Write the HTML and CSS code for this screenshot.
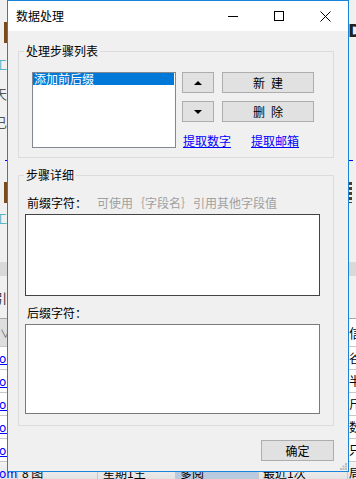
FILE: index.html
```html
<!DOCTYPE html>
<html lang="zh-CN">
<head>
    <meta charset="UTF-8">
    <meta name="viewport" content="width=device-width, initial-scale=1.0">
    <title>数据处理</title>
    <link rel="stylesheet" href="styles.css">
</head>
<body>
<div class="screen">
    <!-- the app window behind the dialog -->
    <div class="backdrop">
        <div class="strip h22"></div>
        <div class="strip h21">
            <span class="edge-l"><i class="mark mark-brown"></i></span>
            <span class="edge-r"><b class="glyph-d">D</b></span>
        </div>
        <div class="strip h117">
            <span class="edge-l">
                <span class="frag frag-teal f1">工</span>
                <span class="frag f2">天</span>
                <span class="frag f3">已</span>
            </span>
            <span class="edge-r"></span>
        </div>
        <div class="strip h1">
            <span class="edge-l"><i class="dot"></i></span>
            <span class="edge-r"><i class="blue-line"></i></span>
        </div>
        <div class="strip h21"></div>
        <div class="strip h21">
            <span class="edge-l"><i class="mark mark-brown"></i></span>
            <span class="edge-r"><i class="mark mark-brown-r"></i></span>
        </div>
        <div class="strip h59">
            <span class="edge-l"><span class="frag frag-teal f4">工</span></span>
        </div>
        <div class="strip h14 band"></div>
        <div class="strip h42">
            <span class="edge-l"><span class="frag f5">引</span></span>
        </div>
        <div class="table-head">
            <span class="head-l">∨</span>
            <span class="head-r">信</span>
        </div>
        <div class="table-row"><span class="c1">om</span><span class="c2">8 图</span><span class="c3">星期1生</span><span class="c4">参阅</span><span class="c5">最近1次</span><span class="c6">谷</span></div>
        <div class="table-row"><span class="c1">om</span><span class="c2">8 图</span><span class="c3">星期1生</span><span class="c4">参阅</span><span class="c5">最近1次</span><span class="c6">半</span></div>
        <div class="table-row"><span class="c1">om</span><span class="c2">8 图</span><span class="c3">星期1生</span><span class="c4">参阅</span><span class="c5">最近1次</span><span class="c6">斤</span></div>
        <div class="table-row"><span class="c1">om</span><span class="c2">8 图</span><span class="c3">星期1生</span><span class="c4">参阅</span><span class="c5">最近1次</span><span class="c6">数</span></div>
        <div class="table-row"><span class="c1">om</span><span class="c2">8 图</span><span class="c3">星期1生</span><span class="c4">参阅</span><span class="c5">最近1次</span><span class="c6">只</span></div>
        <div class="table-row row-last"><span class="c1">om</span><span class="c2">8 图</span><span class="c3">星期1生</span><span class="c4 c4-sel">爹阅</span><span class="c5">最近1次</span><span class="c6">局</span></div>
    </div>

    <div class="dialog">
        <div class="titlebar">
            <span class="title">数据处理</span>
            <div class="caption-buttons">
                <span class="cap"><svg width="10" height="1"><rect width="10" height="1" fill="#000"/></svg></span>
                <span class="cap"><svg width="10" height="10"><rect x="0.5" y="0.5" width="9" height="9" fill="none" stroke="#000"/></svg></span>
                <span class="cap"><svg width="11" height="11"><path d="M0.5 0.5 L10.5 10.5 M10.5 0.5 L0.5 10.5" stroke="#000" stroke-width="1"/></svg></span>
            </div>
        </div>

        <div class="client">
            <fieldset class="group">
                <legend>处理步骤列表</legend>
                <div class="steps">
                    <div class="listbox">
                        <div class="list-item selected">添加前后缀</div>
                    </div>
                    <div class="step-tools">
                        <div class="tool-row">
                            <button class="btn btn-arrow"><span class="tri tri-up"></span></button>
                            <button class="btn btn-wide">新建</button>
                        </div>
                        <div class="tool-row tool-row-2">
                            <button class="btn btn-arrow"><span class="tri tri-down"></span></button>
                            <button class="btn btn-wide">删除</button>
                        </div>
                        <div class="links">
                            <a href="#">提取数字</a>
                            <a href="#">提取邮箱</a>
                        </div>
                    </div>
                </div>
            </fieldset>

            <fieldset class="group group-detail">
                <legend>步骤详细</legend>
                <div class="detail">
                    <div class="field-label">前缀字符：<span class="hint">可使用｛字段名｝引用其他字段值</span></div>
                    <textarea class="field field-prefix"></textarea>
                    <div class="field-label field-label-2">后缀字符：</div>
                    <textarea class="field field-suffix"></textarea>
                </div>
            </fieldset>

            <div class="footer">
                <button class="btn btn-ok">确定</button>
            </div>
        </div>

        <svg class="grip" width="7" height="7">
            <rect x="5" y="0" width="2" height="2" fill="#bdbdbd"/>
            <rect x="2.5" y="2.5" width="2" height="2" fill="#bdbdbd"/>
            <rect x="5" y="2.5" width="2" height="2" fill="#bdbdbd"/>
            <rect x="0" y="5" width="2" height="2" fill="#bdbdbd"/>
            <rect x="2.5" y="5" width="2" height="2" fill="#bdbdbd"/>
            <rect x="5" y="5" width="2" height="2" fill="#bdbdbd"/>
        </svg>
    </div>
</div>
</body>
</html>
```

FILE: styles.css
```css
body {
    margin: 0;
    padding: 0;
    font-family: "Noto Sans CJK SC", "Noto Sans", sans-serif;
    font-size: 12px;
    color: #000;
}

.screen {
    position: relative;
    width: 356px;
    height: 479px;
    overflow: hidden;
}

/* ---- background window ---- */

.backdrop {
    display: flex;
    flex-direction: column;
    height: 479px;
    background-color: #f0f0f0;
    overflow: hidden;
}

.strip {
    display: flex;
    justify-content: space-between;
    flex-shrink: 0;
}

.h1 { height: 1px; }
.h14 { height: 14px; }
.h21 { height: 21px; }
.h22 { height: 22px; }
.h42 { height: 42px; }
.h59 { height: 59px; }
.h117 { height: 117px; }

.band {
    background-color: #d9d9d9;
}

.edge-l,
.edge-r {
    width: 7px;
    overflow: hidden;
    display: flex;
    flex-direction: column;
}

.mark {
    display: block;
    width: 3px;
    height: 21px;
}

.mark-brown {
    margin-left: 4px;
    background-color: #7b4a1c;
}

.mark-brown-r {
    background: repeating-linear-gradient(#5b3a1a 0 3px, #f0f0f0 3px 5px);
}

.glyph-d {
    font-family: "DejaVu Sans", sans-serif;
    font-size: 17px;
    line-height: 18px;
    color: #222;
    margin-left: -1px;
}

.dot {
    display: block;
    width: 2px;
    height: 1px;
    margin-left: 5px;
    background-color: #0000ff;
}

.blue-line {
    display: block;
    width: 4px;
    height: 1px;
    background-color: #0000ff;
}

.frag {
    display: block;
    font-size: 13px;
    line-height: 14px;
    margin-left: -6px;
    color: #555;
    white-space: nowrap;
}

.frag-teal { color: #5ab4c8; }
.f1 { margin-top: 14px; }
.f2 { margin-top: 16px; }
.f3 { margin-top: 14px; }
.f4 { margin-top: 8px; }
.f5 { margin-top: 15px; color: #333; }

.table-head {
    display: flex;
    justify-content: space-between;
    flex-shrink: 0;
    height: 28px;
    line-height: 28px;
    border-top: 1px solid #a8a8a8;
    box-sizing: border-box;
    background-color: #fff;
}

.head-l {
    width: 7px;
    overflow: hidden;
    background-color: #dedede;
    color: #666;
    font-size: 11px;
}

.head-r {
    width: 7px;
    overflow: hidden;
    font-size: 13px;
}

.table-row {
    display: flex;
    flex-shrink: 0;
    height: 23px;
    line-height: 22px;
    box-sizing: border-box;
    border-top: 1px solid #c8c8c8;
    background-color: #fff;
    white-space: nowrap;
}

.table-row span {
    box-sizing: border-box;
    overflow: hidden;
    border-right: 1px solid #c8c8c8;
}

.table-row .c1 {
    width: 18px;
    color: #0000ff;
    text-decoration: underline;
    text-indent: -1px;
}

.c2 { width: 80px; padding-left: 4px; }
.c3 { width: 78px; padding-left: 5px; }
.c4 { width: 83px; padding-left: 4px; }
.c5 { width: 89px; padding-left: 4px; }
.table-row .c6 { width: 8px; padding-left: 1px; border-right: none; }

.row-last {
    background: linear-gradient(#f4f4f4, #dedede);
}

.c4-sel {
    background-color: #b9c9de;
}

/* ---- dialog ---- */

.dialog {
    position: absolute;
    left: 7px;
    top: 0;
    width: 342px;
    height: 472px;
    box-sizing: border-box;
    border: 1px solid #1883d7;
    background-color: #f0f0f0;
}

.titlebar {
    display: flex;
    align-items: center;
    height: 30px;
    background-color: #fff;
}

.title {
    padding-left: 8px;
    line-height: 30px;
}

.caption-buttons {
    display: flex;
    margin-left: auto;
}

.cap {
    display: flex;
    align-items: center;
    justify-content: center;
    width: 46px;
    height: 30px;
}

.client {
    padding: 13px 14px 0 10px;
}

.group {
    margin: 0;
    padding: 0;
    min-width: 0;
    border: 1px solid #dcdcdc;
}

.group legend {
    margin-left: 5px;
    padding: 0 2px;
    line-height: 14px;
}

.group-detail {
    margin-top: 10px;
}

.steps {
    display: flex;
    padding: 14px 0 9px 13px;
}

.listbox {
    width: 144px;
    height: 76px;
    box-sizing: border-box;
    border: 1px solid #828790;
    background-color: #fff;
    padding: 0 1px 0 0;
}

.list-item {
    height: 12px;
    line-height: 12px;
    padding-left: 1px;
    white-space: nowrap;
}

.list-item.selected {
    background-color: #0078d7;
    color: #fff;
}

.step-tools {
    display: flex;
    flex-direction: column;
    margin-left: 6px;
}

.tool-row {
    display: flex;
    gap: 8px;
}

.tool-row-2 {
    margin-top: 8px;
}

.btn {
    box-sizing: border-box;
    height: 21px;
    padding: 0;
    border: 1px solid #adadad;
    background-color: #e1e1e1;
    font: inherit;
    color: #000;
    line-height: 19px;
}

.btn-arrow {
    width: 32px;
    display: flex;
    align-items: center;
    justify-content: center;
}

.btn-wide {
    width: 92px;
    letter-spacing: 6px;
    text-indent: 6px;
}

.tri {
    display: block;
    width: 0;
    height: 0;
    border-left: 4px solid transparent;
    border-right: 4px solid transparent;
}

.tri-up {
    border-bottom: 4px solid #000;
}

.tri-down {
    border-top: 4px solid #000;
}

.links {
    display: flex;
    gap: 20px;
    margin-top: 12px;
    padding-left: 1px;
    line-height: 14px;
}

.links a {
    color: #0000ff;
    text-decoration: underline;
}

.detail {
    padding: 13px 0 11px 6px;
}

.field-label {
    padding-left: 2px;
    line-height: 16px;
    white-space: nowrap;
}

.field-label-2 {
    margin-top: 9px;
}

.hint {
    margin-left: 10px;
    color: #a0a0a0;
}

.field {
    display: block;
    box-sizing: border-box;
    width: 295px;
    margin: 3px 0 0;
    padding: 0;
    resize: none;
    outline: none;
    background-color: #fff;
    font: inherit;
}

.field-prefix {
    height: 82px;
    border: 1px solid #434343;
}

.field-suffix {
    height: 90px;
    border: 1px solid #7a7a7a;
}

.footer {
    display: flex;
    justify-content: flex-end;
    margin-top: 14px;
}

.btn-ok {
    width: 73px;
}

.grip {
    position: absolute;
    right: 1px;
    bottom: 1px;
}
```
